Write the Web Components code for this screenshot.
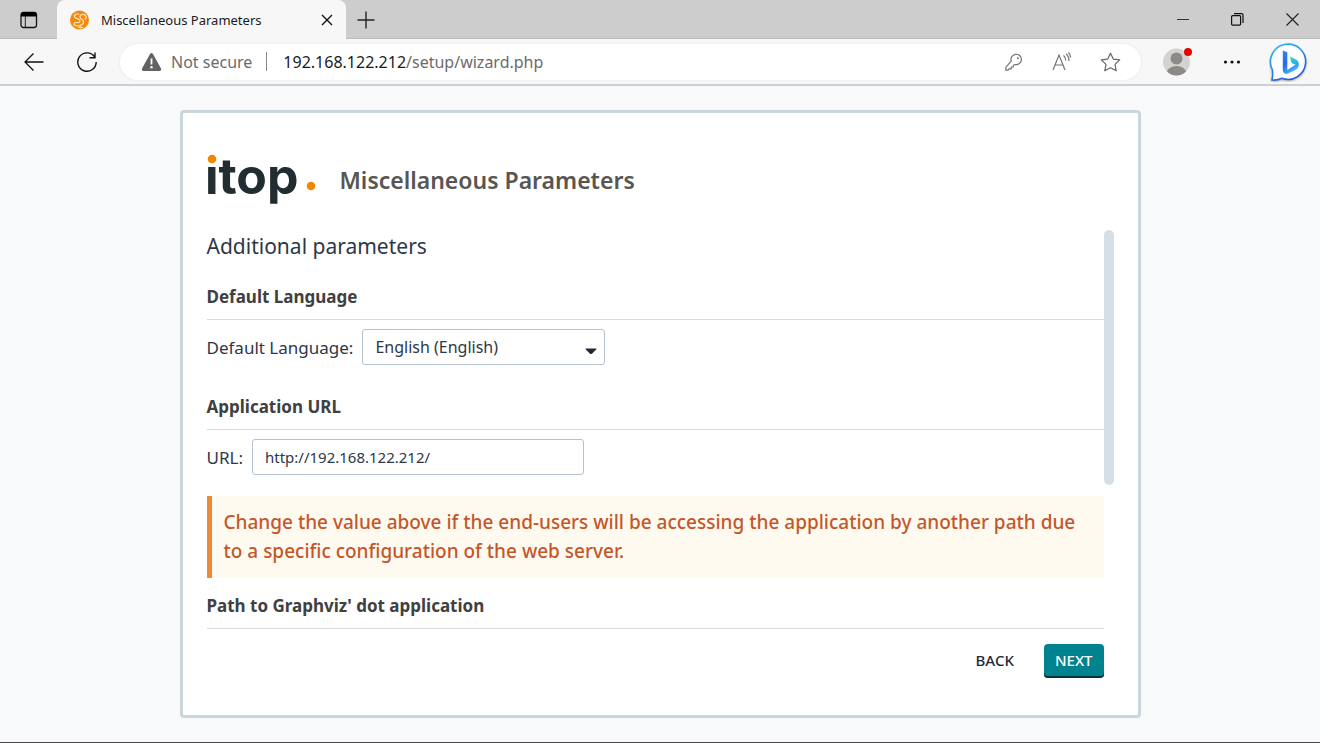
<!DOCTYPE html>
<html lang="en">
<head>
<meta charset="utf-8">
<title>Miscellaneous Parameters</title>
<style>
body{margin:0;font-family:"Noto Sans",sans-serif;color:#2d3748}
</style>
</head>
<body>
<browser-window>
  <browser-tabs slot="chrome" label="Miscellaneous Parameters"></browser-tabs>
  <browser-toolbar slot="chrome" host="192.168.122.212" path="/setup/wizard.php"></browser-toolbar>
  <wizard-card>
    <itop-logo slot="logo"></itop-logo>
    <span slot="title">Miscellaneous Parameters</span>
    <wizard-heading>Additional parameters</wizard-heading>
    <form-section heading="Default Language">
      <select-field label="Default Language:" options="English (English)"></select-field>
    </form-section>
    <form-section heading="Application URL">
      <text-field label="URL:" value="http://192.168.122.212/"></text-field>
      <warning-message>Change the value above if the end-users will be accessing the application by another path due to a specific configuration of the web server.</warning-message>
    </form-section>
    <form-section heading="Path to Graphviz' dot application"></form-section>
    <wizard-button slot="actions">Back</wizard-button>
    <wizard-button slot="actions" primary>Next</wizard-button>
  </wizard-card>
</browser-window>

<script>
const define = (name, render) => customElements.define(name, class extends HTMLElement {
  constructor() {
    super();
    this.attachShadow({ mode: 'open' });
  }
  connectedCallback() {
    this.shadowRoot.innerHTML = render(this);
  }
});

define('browser-window', () => `
<style>
:host{display:flex;flex-direction:column;min-height:100vh;box-sizing:border-box;background:#f8f9fb;border-bottom:1px solid #48484a}
main{padding:24px 24px 20px}
</style>
<slot name="chrome"></slot>
<main><slot></slot></main>`);

define('browser-tabs', el => `
<style>
:host{display:flex;align-items:stretch;height:39px;background:#cdcdcd;color:#1b1b1b;font-size:13px;box-shadow:inset 0 -2px 1px -1px #bcbcbc}
button{border:0;padding:0;background:none;color:inherit;display:grid;place-items:center}
svg{display:block}
.space{width:57px}
.tab{display:flex;align-items:center;width:289px;box-sizing:border-box;padding:0 12px 0 13px;background:#f7f7f7;border-radius:8px 8px 0 0}
.tab span{flex:1;margin-left:12px;white-space:nowrap}
.plus{width:40px}
.controls{display:flex;margin-left:auto}
.controls button{width:55px}
</style>
<button class="space" aria-label="Tab actions"><svg width="18" height="18" viewBox="0 0 18 18"><rect x="1" y="1.5" width="15.500" height="15" rx="2.500" fill="none" stroke="#111" stroke-width="1.300"/><path d="M1 6V3.500A2.500 2.500 0 0 1 3.500 1H14a2.500 2.500 0 0 1 2.500 2.500V5.500H1z" fill="#000"/><path d="M5.300 5v11.500" stroke="#222"/></svg></button>
<div class="tab">
  <svg width="19" height="20" viewBox="0 0 19 20"><circle cx="9.500" cy="10" r="9.500" fill="#f28a0c"/><path d="M9 4.300C6 3.300 3.700 5 4.600 6.900S8.600 8.300 9.600 10s-.6 3-2.600 2.600-3.200.2-3 1.700 3 1.700 5.500 1.200 4.600-2.200 4-4.200-3.800-2.500-3.600-4.400 1.600-2.700 3.400-2.600 2.800 1.700 3 3.600l-1.600 1.600M10 15.500l.6 2.800M8 17.300h5" fill="none" stroke="#ffe4bd" stroke-width="1.200"/></svg>
  <span>${el.getAttribute('label')}</span>
  <button aria-label="Close tab"><svg width="14" height="14" viewBox="0 0 14 14"><path d="M2 2l10 10M12 2L2 12" stroke="#111" stroke-width="1.400"/></svg></button>
</div>
<button class="plus" aria-label="New tab"><svg width="18" height="18" viewBox="0 0 18 18"><path d="M9 .5v17M.5 9h17" stroke="#222" stroke-width="1.400"/></svg></button>
<div class="controls">
  <button aria-label="Minimize"><svg width="12" height="12" viewBox="0 0 12 12"><path d="M0 5.500h12" stroke="#333"/></svg></button>
  <button aria-label="Restore"><svg width="13" height="13" viewBox="0 0 13 13"><rect x=".6" y="2.600" width="9" height="9.500" rx="1" fill="none" stroke="#111" stroke-width="1.200"/><path d="M3 .7h7.500a1.500 1.500 0 0 1 1.500 1.500V10" fill="none" stroke="#111" stroke-width="1.200"/></svg></button>
  <button aria-label="Close"><svg width="13" height="13" viewBox="0 0 13 13"><path d="M.5.500l12 12M12.500.500l-12 12" stroke="#222" stroke-width="1.200"/></svg></button>
</div>`);

define('browser-toolbar', el => `
<style>
:host{display:flex;align-items:center;height:45px;padding:0 11px 0 24px;background:#f7f7f7;border-bottom:2px solid #cfcfd1;font-size:16px;color:#1b1b1b}
button{border:0;padding:0;background:none;flex:none}
svg{display:block}
.back{margin-right:33px}
.reload{margin-right:23px}
.bar{flex:1;display:flex;align-items:center;height:36px;padding:0 20px 0 21px;border-radius:18px;background:#fff;box-shadow:0 0 3px #e4e4e4}
.state{margin-left:9px;color:#6b6b6b;white-space:nowrap}
hr{width:1px;height:19px;border:0;margin:0 16px 0 14px;background:#8a8a8a}
.url{flex:1;outline:0;white-space:nowrap}
.url span{color:#6b6b6b}
.tools{display:flex;gap:27px}
.user{margin-left:22px;position:relative}
.user i{position:absolute;right:-2px;top:0;width:8px;height:8px;border-radius:50%;background:#e60505}
.more{margin:0 28px 0 33px}
</style>
<button class="back" aria-label="Back"><svg width="20" height="20" viewBox="0 0 20 20"><path d="M19.500 10H1M9.500 1.500L1 10l8.500 8.500" fill="none" stroke="#111" stroke-width="1.300"/></svg></button>
<button class="reload" aria-label="Reload"><svg width="20" height="20" viewBox="0 0 20 20"><path d="M17.700 5A9.200 9.200 0 1 0 19.200 10M18 .5V5.800H12.500" fill="none" stroke="#111" stroke-width="1.400"/></svg></button>
<div class="bar">
  <svg width="21" height="20" viewBox="0 0 21 20"><path d="M9 2Q10.500 0 12 2L20 16.500Q20.500 19 18.500 19H2.500Q.5 19 1 16.500z" fill="#636363"/><path d="M10.500 6.500v6" stroke="#fff" stroke-width="1.800"/><circle cx="10.500" cy="15.200" r="1.200" fill="#fff"/></svg>
  <span class="state">Not secure</span><hr>
  <div class="url" role="textbox" aria-label="Address" contenteditable="true" spellcheck="false">${el.getAttribute('host')}<span>${el.getAttribute('path')}</span></div>
  <div class="tools">
    <button aria-label="Passwords"><svg width="20" height="20" viewBox="0 0 20 20"><path d="M7.300 9.200A5.200 5.200 0 1 1 11 12.500L9.300 13.200V15H7.300v1.800H5.300L3.800 18.200H1.900V15.200zM14 6.100v.2" fill="none" stroke="#737373" stroke-width="1.200" stroke-linejoin="round"/><circle cx="13.800" cy="6.200" r="1" fill="#737373"/></svg></button>
    <button aria-label="Read aloud"><svg width="22" height="20" viewBox="0 0 22 20"><path d="M2 18L8 3l6 15M4.200 13h7.600M12.500 3.500q2.500 2 2.200 5M15 1.800q3.300 3 2.800 7.200M17.500.5q2 2 2.200 5" fill="none" stroke="#737373" stroke-width="1.200"/></svg></button>
    <button aria-label="Add to favorites"><svg width="21" height="20" viewBox="0 0 21 20"><path d="M10.500 1.200l2.800 5.900 6.400.8-4.700 4.500 1.200 6.400-5.700-3.100-5.700 3.100L6 12.400 1.300 7.900l6.400-.8z" fill="none" stroke="#666" stroke-width="1.200" stroke-linejoin="round"/></svg></button>
  </div>
</div>
<button class="user" aria-label="Profile"><svg width="27" height="28" viewBox="0 0 27 28"><clipPath id="c"><circle cx="13.500" cy="14" r="13.500"/></clipPath><g clip-path="url(#c)"><path fill="#d4d3cf" d="M0 0h27v28H0z"/><circle cx="13.500" cy="10.500" r="6" fill="#8c8986"/><ellipse cx="13.500" cy="24.500" rx="9.700" ry="6.500" fill="#8c8986"/></g></svg><i></i></button>
<button class="more" aria-label="Settings and more"><svg width="18" height="20" viewBox="0 0 18 20"><g fill="#111"><circle cx="2.500" cy="10" r="1.600"/><circle cx="9" cy="10" r="1.600"/><circle cx="15.500" cy="10" r="1.600"/></g></svg></button>
<button aria-label="Bing chat"><svg width="40" height="40" viewBox="0 0 40 40"><defs><linearGradient id="r" x1="0" y1="0" x2=".6" y2="1"><stop offset="0" stop-color="#27c8ea"/><stop offset="1" stop-color="#2757dc"/></linearGradient><linearGradient id="b" x1="0" y1="0" x2=".5" y2="1"><stop offset="0" stop-color="#2e8cf0"/><stop offset=".5" stop-color="#2468e6"/><stop offset="1" stop-color="#45b6ff"/></linearGradient><linearGradient id="d" x1="0" y1="0" x2="1" y2="1"><stop offset="0" stop-color="#39d8cf"/><stop offset="1" stop-color="#1f9eea"/></linearGradient></defs><path d="M3 38Q4.200 33 3.500 28A17.600 17.600 0 1 1 13 36.300Q8 38.600 3 38z" fill="#fff" stroke="url(#r)" stroke-width="1.600" style="filter:drop-shadow(0 1px 1px #aaa)"/><path d="M13.800 8.500l4.500 1.800V28l8.500-5.500q3 0 2.500 2.500-.8 2-3 3L19 31.500q-2 1-3.700-.2-1.500-1-1.500-3z" fill="url(#b)"/><path d="M21 14.500l6 3q3 1.800 2.800 5.500l-.5 2-1-1.500-4.800-2q-1-.5-1.500-2z" fill="url(#d)"/></svg></button>`);

define('wizard-card', () => `
<style>
:host{display:block;box-sizing:border-box;width:100%;max-width:961px;margin:0 auto;padding:41px 24px 37px;background:#fff;border:3px solid #cbd5dc;border-radius:4px}
header{display:flex;align-items:center;gap:24px;margin-bottom:24px}
h1{margin:0;font-size:23px;line-height:32px;font-weight:600;color:#585653}
.scroll{display:grid;grid-template-columns:1fr 10px}
.thumb{height:64%;border-radius:5px;background:#d7dfe6}
footer{display:flex;justify-content:flex-end;gap:19px;margin:15px 10px 0 0}
</style>
<header><slot name="logo"></slot><h1><slot name="title"></slot></h1></header>
<div class="scroll"><div><slot></slot></div><div class="thumb"></div></div>
<footer><slot name="actions"></slot></footer>`);

define('itop-logo', () => `
<style>
:host{display:block}
svg{display:block;overflow:visible}
text{font:700 50px Inter,sans-serif;fill:#222d31}
</style>
<svg width="109" height="52" viewBox="0 0 109 52" role="img" aria-label="itop">
  <text x="-2" y="40">itop</text>
  <circle cx="5" cy="5" r="7" fill="#fff"/>
  <circle cx="5" cy="5" r="4.300" fill="#f18700"/>
  <circle cx="104" cy="32" r="4.300" fill="#f18700"/>
</svg>`);

define('wizard-heading', () => `
<style>
:host{display:block;margin-bottom:23px}
h2{margin:0;font-size:21px;line-height:32px;font-weight:400}
</style>
<h2><slot></slot></h2>`);

define('form-section', el => `
<style>
:host{display:block}
:host(:not(:last-of-type)){margin-bottom:30px}
h3{margin:0;padding-bottom:10px;border-bottom:1px solid #d9dadc;font-size:17px;line-height:24px;font-weight:700;color:#404040}
::slotted(*){margin-top:9px}
::slotted(warning-message){margin:21px 0 -14px}
</style>
<h3>${el.getAttribute('heading')}</h3>
<slot></slot>`);

const fieldStyle = `
:host{display:flex;align-items:center;gap:9px;font-size:17px}
label{white-space:nowrap}
select,input{box-sizing:border-box;height:36px;margin:0;padding:0 12px;border:1px solid #b3c2d1;border-radius:3px;background:#fff;font-family:inherit;color:#2d3748}`;

define('select-field', el => `
<style>${fieldStyle}
div{position:relative}
select{appearance:none;width:243px;font-size:16px}
svg{position:absolute;right:8px;bottom:10px;pointer-events:none}
</style>
<label for="f">${el.getAttribute('label')}</label>
<div><select id="f"><option>${el.getAttribute('options')}</option></select>
<svg width="12" height="7" viewBox="0 0 12 7"><path d="M1 0.500h10q1 .2.200 1L7 5.700q-1 .8-2 0L.8 1.500Q0 .7 1 .5z" fill="#1f2937"/></svg></div>`);

define('text-field', el => `
<style>${fieldStyle}
input{width:332px;font-size:15px}
</style>
<label for="f">${el.getAttribute('label')}</label>
<input id="f" type="text" value="${el.getAttribute('value')}">`);

define('warning-message', () => `
<style>
:host{display:block;padding:12px 24px 12px 12px;border-left:5px solid #ee8a36;background:#fffaf0;color:#c4572a;font-size:19px;font-weight:500;line-height:29px}
</style>
<slot></slot>`);

define('wizard-button', el => `
<style>
button{height:34px;margin:0;padding:0 11px 2px;border:0;border-radius:4px;background:none;font:500 15px "Noto Sans",sans-serif;text-transform:uppercase;color:#1f2937}
:host([primary]) button{background:#00838f;color:#fff;box-shadow:inset 0 -2px 0 #00343a}
</style>
<button type="button"><slot></slot></button>`);
</script>
</body>
</html>
